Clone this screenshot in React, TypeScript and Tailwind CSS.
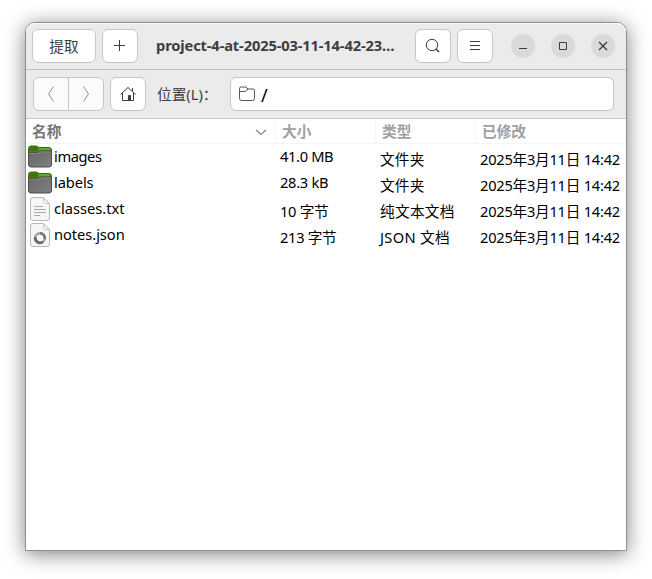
import React from 'react';

interface Entry {
  name: string;
  nameClass: string;
  size: string;
  sizeClass: string;
  type: string;
  typeClass: string;
  modified: string;
  icon: 'folder' | 'text' | 'json';
}

const entries: Entry[] = [
  { name: 'images', nameClass: 'tracking-[-0.4px]', size: '41.0 MB', sizeClass: 'pb-[2px] tracking-[-0.35px]', type: '文件夹', typeClass: 'tracking-[0.2px]', modified: '2025年3月11日 14:42', icon: 'folder' },
  { name: 'labels', nameClass: 'tracking-[-0.1px]', size: '28.3 kB', sizeClass: 'pb-[2px] tracking-[-0.3px]', type: '文件夹', typeClass: 'tracking-[0.2px]', modified: '2025年3月11日 14:42', icon: 'folder' },
  { name: 'classes.txt', nameClass: '', size: '10 字节', sizeClass: 'pt-[4px] tracking-[-0.3px]', type: '纯文本文档', typeClass: 'tracking-[0.3px]', modified: '2025年3月11日 14:42', icon: 'text' },
  { name: 'notes.json', nameClass: 'tracking-[-0.05px]', size: '213 字节', sizeClass: 'pt-[4px] tracking-[-0.3px]', type: 'JSON 文档', typeClass: 'tracking-[0.3px]', modified: '2025年3月11日 14:42', icon: 'json' },
];

const button = 'flex h-[34px] items-center justify-center rounded-[6px] border border-[#c6c6c6] bg-white';

const FolderIcon = () => (
  <svg width="24" height="24" viewBox="0 0 24 24">
    <defs>
      <linearGradient id="folder-front" x1="0" y1="0" x2="1" y2="1">
        <stop offset="0" stopColor="#666" />
        <stop offset="1" stopColor="#828282" />
      </linearGradient>
    </defs>
    <path d="M.5 20V3.500q0-2.500 2.500-2.500h5.500q1.500 0 2.300 1.500H21q2.500 0 2.500 2.500v15.500Z" fill="#4d931f" stroke="#3b6a18" />
    <path d="M1 4Q1 1.500 3 1.500h5.500q1 0 1.500 1.500l-.5 3.500H1Z" fill="#3b760a" />
    <path d="M11 4h11" stroke="#74b848" />
    <path d="M.5 7.500h8.500q1.500 0 2-1.500h12.500v13.500q0 2.500-2.500 2.500H3q-2.500 0-2.500-2.500Z" fill="url(#folder-front)" stroke="#4c5147" />
    <path d="M1.500 8.500h8q1.500 0 2-1.500h11" fill="none" stroke="#8e8e8e" strokeWidth=".8" />
  </svg>
);

const FileIcon = ({ kind }: { kind: 'text' | 'json' }) => (
  <svg width="24" height="24" viewBox="0 0 24 24">
    <path d="M5 .5h10.500l6 6V21q0 2.500-2.500 2.500H5Q2.500 23.500 2.500 21V3Q2.500.5 5 .5Z" fill="#f6f6f6" stroke="#b7b7b7" />
    <path d="M15.500 1v3.500q0 2 2 2h3.500Z" fill="#fff" stroke="#bebebe" strokeWidth=".9" />
    {kind === 'text' ? (
      <path d="M6 9.500h9M6 12.500h12M6 15.500h12M6 18.500h6" stroke="#a9a9a9" />
    ) : (
      <g fill="none" strokeWidth="2.500">
        <circle cx="12" cy="15" r="4.800" stroke="#a2a2a2" />
        <path d="M7.300 14a4.800 4.800 0 0 0 7.700 4.800" stroke="#686868" />
        <path d="M12 10.200a4.800 4.800 0 0 1 4.700 5.700" stroke="#777" />
      </g>
    )}
  </svg>
);

const HeaderBar = () => (
  <header className="flex h-[47px] items-start rounded-t-[9px] border-b border-[#bfbfbf] bg-[#ebebeb] pl-[6px] pt-[6px] shadow-[inset_0_1px_0_#fafafa]">
    <button className={`${button} w-[64px] text-[14.67px]`}>提取</button>
    <button className={`${button} ml-[6px] w-[36px]`}>
      <svg width="16" height="16" viewBox="0 0 16 16" fill="none" stroke="#3d3d3d">
        <path d="M7.500 2v11M2 7.500h11" />
      </svg>
    </button>
    <h1 className="ml-[18px] w-[259px] whitespace-nowrap pt-[6px] text-[14.67px] font-bold leading-[21px] tracking-[-0.13px]">
      project-4-at-2025-03-11-14-42-23…
    </h1>
    <button className={`${button} w-[36px]`}>
      <svg width="16" height="16" viewBox="0 0 16 16" fill="none" stroke="#3d3d3d">
        <circle cx="7" cy="7" r="5.700" />
        <path d="m11 11 3 3" strokeWidth="1.500" />
      </svg>
    </button>
    <button className={`${button} ml-[6px] w-[36px]`}>
      <svg width="16" height="16" viewBox="0 0 16 16" stroke="#3d3d3d">
        <path d="M3 3.500h10M3 7.500h10M3 11.500h10" />
      </svg>
    </button>
    <div className="ml-[18px] mt-[5px] flex gap-[16px]">
      <button className="size-6 rounded-full bg-[#dadada]">
        <svg width="24" height="24" viewBox="0 0 24 24" stroke="#3d3d3d">
          <path d="M8 14.500h8" />
        </svg>
      </button>
      <button className="size-6 rounded-full bg-[#dadada]">
        <svg width="24" height="24" viewBox="0 0 24 24" stroke="#3d3d3d" fill="none">
          <path d="M8.500 8.500h7v7h-7Z" />
        </svg>
      </button>
      <button className="size-6 rounded-full bg-[#dadada]">
        <svg width="24" height="24" viewBox="0 0 24 24" stroke="#3d3d3d" strokeWidth="1.300">
          <path d="m8 8 8 8m0-8-8 8" />
        </svg>
      </button>
    </div>
  </header>
);

const LocationBar = () => (
  <div className="flex h-[49px] items-start border-b border-[#c6c6c6] bg-[#ebebeb] pl-[7px] pt-[7px]">
    <div className="flex h-[34px] w-[71px] rounded-[6px] border border-[#c6c6c6] bg-[#fbfbfb]">
      <button className="flex w-[35px] items-center justify-center border-r border-[#c6c6c6]">
        <svg width="16" height="16" viewBox="0 0 16 16" fill="none" stroke="#929292">
          <path d="M10.500.5 5.500 8l5 7.500" />
        </svg>
      </button>
      <button className="flex w-[34px] items-center justify-center">
        <svg width="16" height="16" viewBox="0 0 16 16" fill="none" stroke="#929292">
          <path d="m5.500.5 5 7.500-5 7.500" />
        </svg>
      </button>
    </div>
    <button className={`${button} ml-[6px] w-[36px]`}>
      <svg width="16" height="16" viewBox="0 0 16 16" fill="none" stroke="#3d3d3d">
        <path d="m.5 8.500 7.500-7 7.500 7M2.500 7v7.500h11V7M12.500 5V2" />
        <path d="M8.500 14.500v-5h2v5" fill="#3d3d3d" />
      </svg>
    </button>
    <span className="ml-[11px] w-[73px] whitespace-nowrap pt-[6px] text-[14.67px] leading-[22px]">位置(L)：</span>
    <div className="flex h-[34px] w-[384px] items-center rounded-[6px] border border-[#c6c6c6] bg-white pl-[8px] text-black">
      <svg width="16" height="16" viewBox="0 0 16 16" fill="none" stroke="#555">
        <path d="M.5 12.500v-10q0-1.500 1.500-1.500h5l2 2h5q1.500 0 1.500 1.500v8q0 2-2 2h-11q-2 0-2-2ZM.5 5.500h6L9 3" />
      </svg>
      <span className="ml-[6px] pt-[2px] text-[18px] leading-[24px]">/</span>
    </div>
  </div>
);

const FileList = () => (
  <main className="text-[14.67px] text-black">
    <div className="grid h-[25px] grid-cols-[250px_100px_100px_150px] border-b border-[#f5f5f5] font-bold leading-[25px] text-[#a0a0a0]">
      <div className="flex items-center justify-between border-r border-[#f6f6f6] pl-[6px] pr-[6px] text-[#777]">
        名称
        <svg width="16" height="16" viewBox="0 0 16 16" fill="none" stroke="#858585" strokeWidth="1.200">
          <path d="m3 6 5 4.500L13 6" />
        </svg>
      </div>
      <div className="border-r border-[#f6f6f6] pl-[6px]">大小</div>
      <div className="border-r border-[#f6f6f6] pl-[6px]">类型</div>
      <div className="pl-[6px]">已修改</div>
    </div>
    {entries.map((e) => (
      <div key={e.name} className="grid h-[26px] grid-cols-[254px_100px_100px_142px] items-center whitespace-nowrap leading-[22px]">
        <div className="flex items-center pl-[2px]">
          {e.icon === 'folder' ? <FolderIcon /> : <FileIcon kind={e.icon} />}
          <span className={`ml-[2px] pb-[2px] ${e.nameClass}`}>{e.name}</span>
        </div>
        <div className={e.sizeClass}>{e.size}</div>
        <div className={`pt-[4px] ${e.typeClass}`}>{e.type}</div>
        <div className="pt-[4px] tracking-[-0.25px]">{e.modified}</div>
      </div>
    ))}
  </main>
);

export default function App() {
  return (
    <div className="h-[579px] w-[652px] overflow-hidden bg-white pl-[25px] pt-[22px] font-['Noto_Sans','Noto_Sans_CJK_SC',sans-serif] text-[#3d3d3d]">
      <div className="h-[529px] w-[602px] rounded-t-[10px] border border-[#8e8e8e] bg-white shadow-[0_3px_20px_rgba(0,0,0,0.5)]">
        <HeaderBar />
        <LocationBar />
        <FileList />
      </div>
    </div>
  );
}
